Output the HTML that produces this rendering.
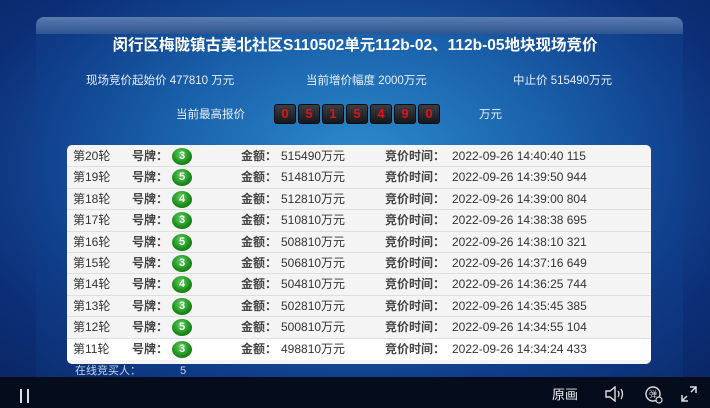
<!DOCTYPE html>
<html><head><meta charset="utf-8"><style>
*{margin:0;padding:0;box-sizing:border-box}
body{width:710px;height:408px;overflow:hidden;background:#0b2d72;font-family:"Liberation Sans","Noto Sans CJK SC",sans-serif;position:relative}
.bg{position:absolute;left:0;top:0;width:710px;height:377px;background:radial-gradient(ellipse at 50% 45%,#2a86c8 0%,#1a5aa6 40%,#0c2f78 80%,#0a2766 100%)}
.panel{position:absolute;left:36px;top:17px;width:647px;height:360px;border-radius:8px 8px 0 0;background:radial-gradient(ellipse at 50% 40%,#2c8ccc 0%,#1b63ad 40%,#0f3c88 75%,#0c2e72 100%)}
.hb{position:absolute;left:36px;top:17px;width:647px;height:17px;border-radius:8px 8px 0 0;background:linear-gradient(#5a7cae,#2e5592)}
.t{position:absolute;color:#fff;white-space:nowrap;line-height:16px}
.title{left:0;width:710px;text-align:center;top:37px;font-size:15.5px;font-weight:bold;line-height:18px}
.info{font-size:11.5px;color:#e8eef8;top:73px}
.digs{position:absolute;left:274px;top:104px;display:flex;gap:2px}
.digs span{width:22px;height:20px;background:linear-gradient(#3a3f46,#15181c);border:1px solid #0a0c10;border-radius:3px;color:#e01414;font-weight:bold;font-size:13px;text-align:center;line-height:18px}
.tbl{position:absolute;left:67px;top:145px;width:584px;height:219px;background:#f4f4f4;border-radius:5px;padding-top:1px}
.row{height:21.4px;border-bottom:1px solid #dedede;position:relative;font-size:12px;color:#333}
.row.last{background:#fff;border-bottom:none}
.row span{position:absolute;top:0;line-height:21px;white-space:nowrap}
.b{font-weight:bold;color:#444}
.ball{position:absolute;left:105px;top:2px;width:20px;height:17px;border-radius:50%;background:radial-gradient(circle at 45% 35%,#5fd35f,#1a8a1a 60%,#0d5e0d);color:#fff;font-weight:bold;font-size:11px;text-align:center;line-height:17px}
.bar{position:absolute;left:0;top:377px;width:710px;height:31px;background:#050d1c}
</style></head><body>
<div class="bg"></div><div class="panel"></div><div class="hb"></div>
<div class="t title">闵行区梅陇镇古美北社区S110502单元112b-02、112b-05地块现场竞价</div>
<div class="t info" style="left:86px">现场竞价起始价 477810 万元</div>
<div class="t info" style="left:306px">当前增价幅度 2000万元</div>
<div class="t info" style="left:513px">中止价 515490万元</div>
<div class="t info" style="left:176px;top:107px">当前最高报价</div>
<div class="digs"><span>0</span><span>5</span><span>1</span><span>5</span><span>4</span><span>9</span><span>0</span></div>
<div class="t info" style="left:479px;top:107px">万元</div>
<div class="tbl">
<div class="row"><span style="left:6px">第20轮</span><span class="b" style="left:65px">号牌：</span><div class="ball">3</div><span class="b" style="left:174px">金额：</span><span style="left:214px">515490万元</span><span class="b" style="left:318px">竞价时间：</span><span style="left:385px">2022-09-26 14:40:40 115</span></div>
<div class="row"><span style="left:6px">第19轮</span><span class="b" style="left:65px">号牌：</span><div class="ball">5</div><span class="b" style="left:174px">金额：</span><span style="left:214px">514810万元</span><span class="b" style="left:318px">竞价时间：</span><span style="left:385px">2022-09-26 14:39:50 944</span></div>
<div class="row"><span style="left:6px">第18轮</span><span class="b" style="left:65px">号牌：</span><div class="ball">4</div><span class="b" style="left:174px">金额：</span><span style="left:214px">512810万元</span><span class="b" style="left:318px">竞价时间：</span><span style="left:385px">2022-09-26 14:39:00 804</span></div>
<div class="row"><span style="left:6px">第17轮</span><span class="b" style="left:65px">号牌：</span><div class="ball">3</div><span class="b" style="left:174px">金额：</span><span style="left:214px">510810万元</span><span class="b" style="left:318px">竞价时间：</span><span style="left:385px">2022-09-26 14:38:38 695</span></div>
<div class="row"><span style="left:6px">第16轮</span><span class="b" style="left:65px">号牌：</span><div class="ball">5</div><span class="b" style="left:174px">金额：</span><span style="left:214px">508810万元</span><span class="b" style="left:318px">竞价时间：</span><span style="left:385px">2022-09-26 14:38:10 321</span></div>
<div class="row"><span style="left:6px">第15轮</span><span class="b" style="left:65px">号牌：</span><div class="ball">3</div><span class="b" style="left:174px">金额：</span><span style="left:214px">506810万元</span><span class="b" style="left:318px">竞价时间：</span><span style="left:385px">2022-09-26 14:37:16 649</span></div>
<div class="row"><span style="left:6px">第14轮</span><span class="b" style="left:65px">号牌：</span><div class="ball">4</div><span class="b" style="left:174px">金额：</span><span style="left:214px">504810万元</span><span class="b" style="left:318px">竞价时间：</span><span style="left:385px">2022-09-26 14:36:25 744</span></div>
<div class="row"><span style="left:6px">第13轮</span><span class="b" style="left:65px">号牌：</span><div class="ball">3</div><span class="b" style="left:174px">金额：</span><span style="left:214px">502810万元</span><span class="b" style="left:318px">竞价时间：</span><span style="left:385px">2022-09-26 14:35:45 385</span></div>
<div class="row"><span style="left:6px">第12轮</span><span class="b" style="left:65px">号牌：</span><div class="ball">5</div><span class="b" style="left:174px">金额：</span><span style="left:214px">500810万元</span><span class="b" style="left:318px">竞价时间：</span><span style="left:385px">2022-09-26 14:34:55 104</span></div>
<div class="row last"><span style="left:6px">第11轮</span><span class="b" style="left:65px">号牌：</span><div class="ball">3</div><span class="b" style="left:174px">金额：</span><span style="left:214px">498810万元</span><span class="b" style="left:318px">竞价时间：</span><span style="left:385px">2022-09-26 14:34:24 433</span></div>
</div>
<div class="t" style="left:75px;top:365px;font-size:11px;line-height:12px;color:#c8d4ea">在线竞买人：</div>
<div class="t" style="left:180px;top:365px;font-size:11px;line-height:12px;color:#c8d4ea">5</div>
<div class="bar">
<div style="position:absolute;left:20px;top:12px;width:2px;height:14px;background:#ddd"></div>
<div style="position:absolute;left:27px;top:12px;width:2px;height:14px;background:#ddd"></div>
<div class="t" style="left:552px;top:10px;font-size:13px;color:#eee">原画</div>
<svg style="position:absolute;left:604px;top:9px" width="22" height="16" viewBox="0 0 22 16"><path d="M2 5h4l5-4v14l-5-4H2z" fill="none" stroke="#ddd" stroke-width="1.4"/><path d="M14 5q2 3 0 6M17 3q3 5 0 10" fill="none" stroke="#ddd" stroke-width="1.3"/></svg>
<svg style="position:absolute;left:644px;top:8px" width="20" height="20" viewBox="0 0 20 20"><circle cx="9" cy="9" r="7" fill="none" stroke="#ddd" stroke-width="1.4"/><text x="5" y="12" font-size="8" fill="#ddd" font-family="Noto Sans CJK SC">弹</text><circle cx="15" cy="15" r="3" fill="#050d1c" stroke="#ddd" stroke-width="1.2"/></svg>
<svg style="position:absolute;left:681px;top:9px" width="16" height="16" viewBox="0 0 16 16"><path d="M9 1h6v6M15 1l-5 5M7 15H1V9M1 15l5-5" fill="none" stroke="#ddd" stroke-width="1.5"/></svg>
</div>
</body></html>
